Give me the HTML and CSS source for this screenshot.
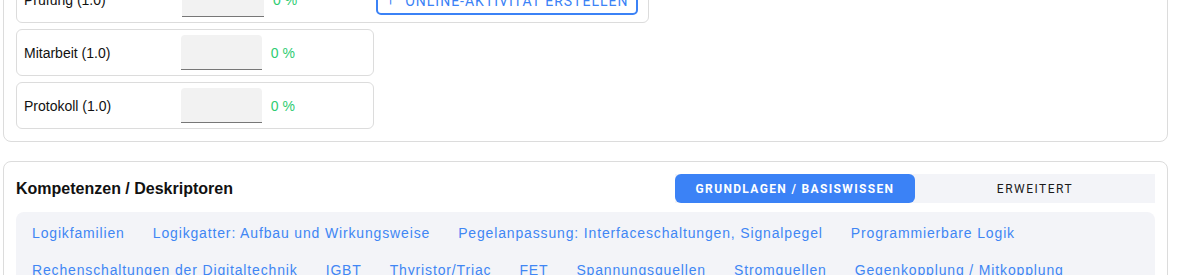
FILE: index.html
```html
<!DOCTYPE html>
<html lang="de">
<head>
    <meta charset="UTF-8">
    <title>Bewertung</title>
    <link rel="stylesheet" href="styles.css">
</head>
<body>
<div class="page">

<!-- Leistungsbereiche -->
<div class="card grades">
    <div class="grade-row wide">
        <span class="grade-label">Prüfung (1.0)</span>
        <div class="grade-input"></div>
        <span class="grade-pct">0 %</span>
        <button class="outline-btn"><span class="plus">+</span> ONLINE-AKTIVITÄT ERSTELLEN</button>
    </div>
    <div class="grade-row">
        <span class="grade-label">Mitarbeit (1.0)</span>
        <div class="grade-input"></div>
        <span class="grade-pct">0 %</span>
    </div>
    <div class="grade-row">
        <span class="grade-label">Protokoll (1.0)</span>
        <div class="grade-input"></div>
        <span class="grade-pct">0 %</span>
    </div>
</div>

<!-- Kompetenzen -->
<div class="card">
    <div class="card-head">
        <h3>Kompetenzen / Deskriptoren</h3>
        <div class="toggle">
            <button class="toggle-btn active">GRUNDLAGEN / BASISWISSEN</button>
            <button class="toggle-btn">ERWEITERT</button>
        </div>
    </div>
    <div class="chips">
        <span class="chip">Logikfamilien</span>
        <span class="chip">Logikgatter: Aufbau und Wirkungsweise</span>
        <span class="chip">Pegelanpassung: Interfaceschaltungen, Signalpegel</span>
        <span class="chip">Programmierbare Logik</span>
        <span class="chip">Rechenschaltungen der Digitaltechnik</span>
        <span class="chip">IGBT</span>
        <span class="chip">Thyristor/Triac</span>
        <span class="chip">FET</span>
        <span class="chip">Spannungsquellen</span>
        <span class="chip">Stromquellen</span>
        <span class="chip">Gegenkopplung / Mitkopplung</span>
    </div>
</div>

</div>
</body>
</html>
```

FILE: styles.css
```css
body { margin: 0; font-family: "Liberation Sans", Arial, sans-serif; background: #fff; color: #111; }
.page { padding: 0 10px 0 3px; }

.card { border: 1px solid #dcdcdc; border-radius: 8px; padding: 12px; background: #fff; margin-bottom: 19px; }
.grades { margin-top: -37px; display: flex; flex-direction: column; align-items: flex-start; gap: 6px; }

.grade-row { display: flex; align-items: center; width: 358px; box-sizing: border-box; border: 1px solid #dcdcdc; border-radius: 6px; padding: 5px 8px 5px 7px; }
.grade-row.wide { width: 633px; padding-right: 9px; }
.grade-label { width: 158px; font-size: 14px; color: #111; }
.grade-input { width: 82px; height: 35px; box-sizing: border-box; background: #f2f2f2; border-bottom: 1px solid #777; border-radius: 4px 4px 0 0; }
.grade-pct { margin-left: 9px; width: 95px; font-size: 14px; color: #2ecc71; }

.outline-btn { height: 31px; width: 262px; margin-left: 8px; border: 2px solid #3b82f6; border-radius: 5px; background: #fff; color: #3b82f6;
    font-family: Roboto, sans-serif; font-size: 14px; font-weight: 400; letter-spacing: 1px; cursor: pointer; padding: 0; }
.outline-btn .plus { font-size: 18px; font-weight: 300; margin-right: 4px; }

.card-head { display: flex; align-items: center; justify-content: space-between; margin-bottom: 9px; }
.card-head h3 { margin: 0; font-size: 16px; font-weight: bold; color: #111; }
.toggle { display: flex; background: #f3f4f8; }
.toggle-btn { width: 240px; height: 29px; border: none; background: transparent; font-family: Roboto, sans-serif; font-size: 12px; font-weight: 400;
    letter-spacing: 1.5px; color: #1a1a1a; cursor: pointer; padding: 0; }
.toggle-btn.active { background: #3b82f6; color: #fff; font-weight: 700; letter-spacing: 1.35px; border-radius: 6px; }

.chips { background: #f3f4f8; border-radius: 8px; padding: 3px 2px; display: flex; flex-wrap: wrap; }
.chip { padding: 8px 14px; line-height: 21px; font-size: 14px; letter-spacing: 0.85px; color: #4086f4; cursor: pointer; }
```
